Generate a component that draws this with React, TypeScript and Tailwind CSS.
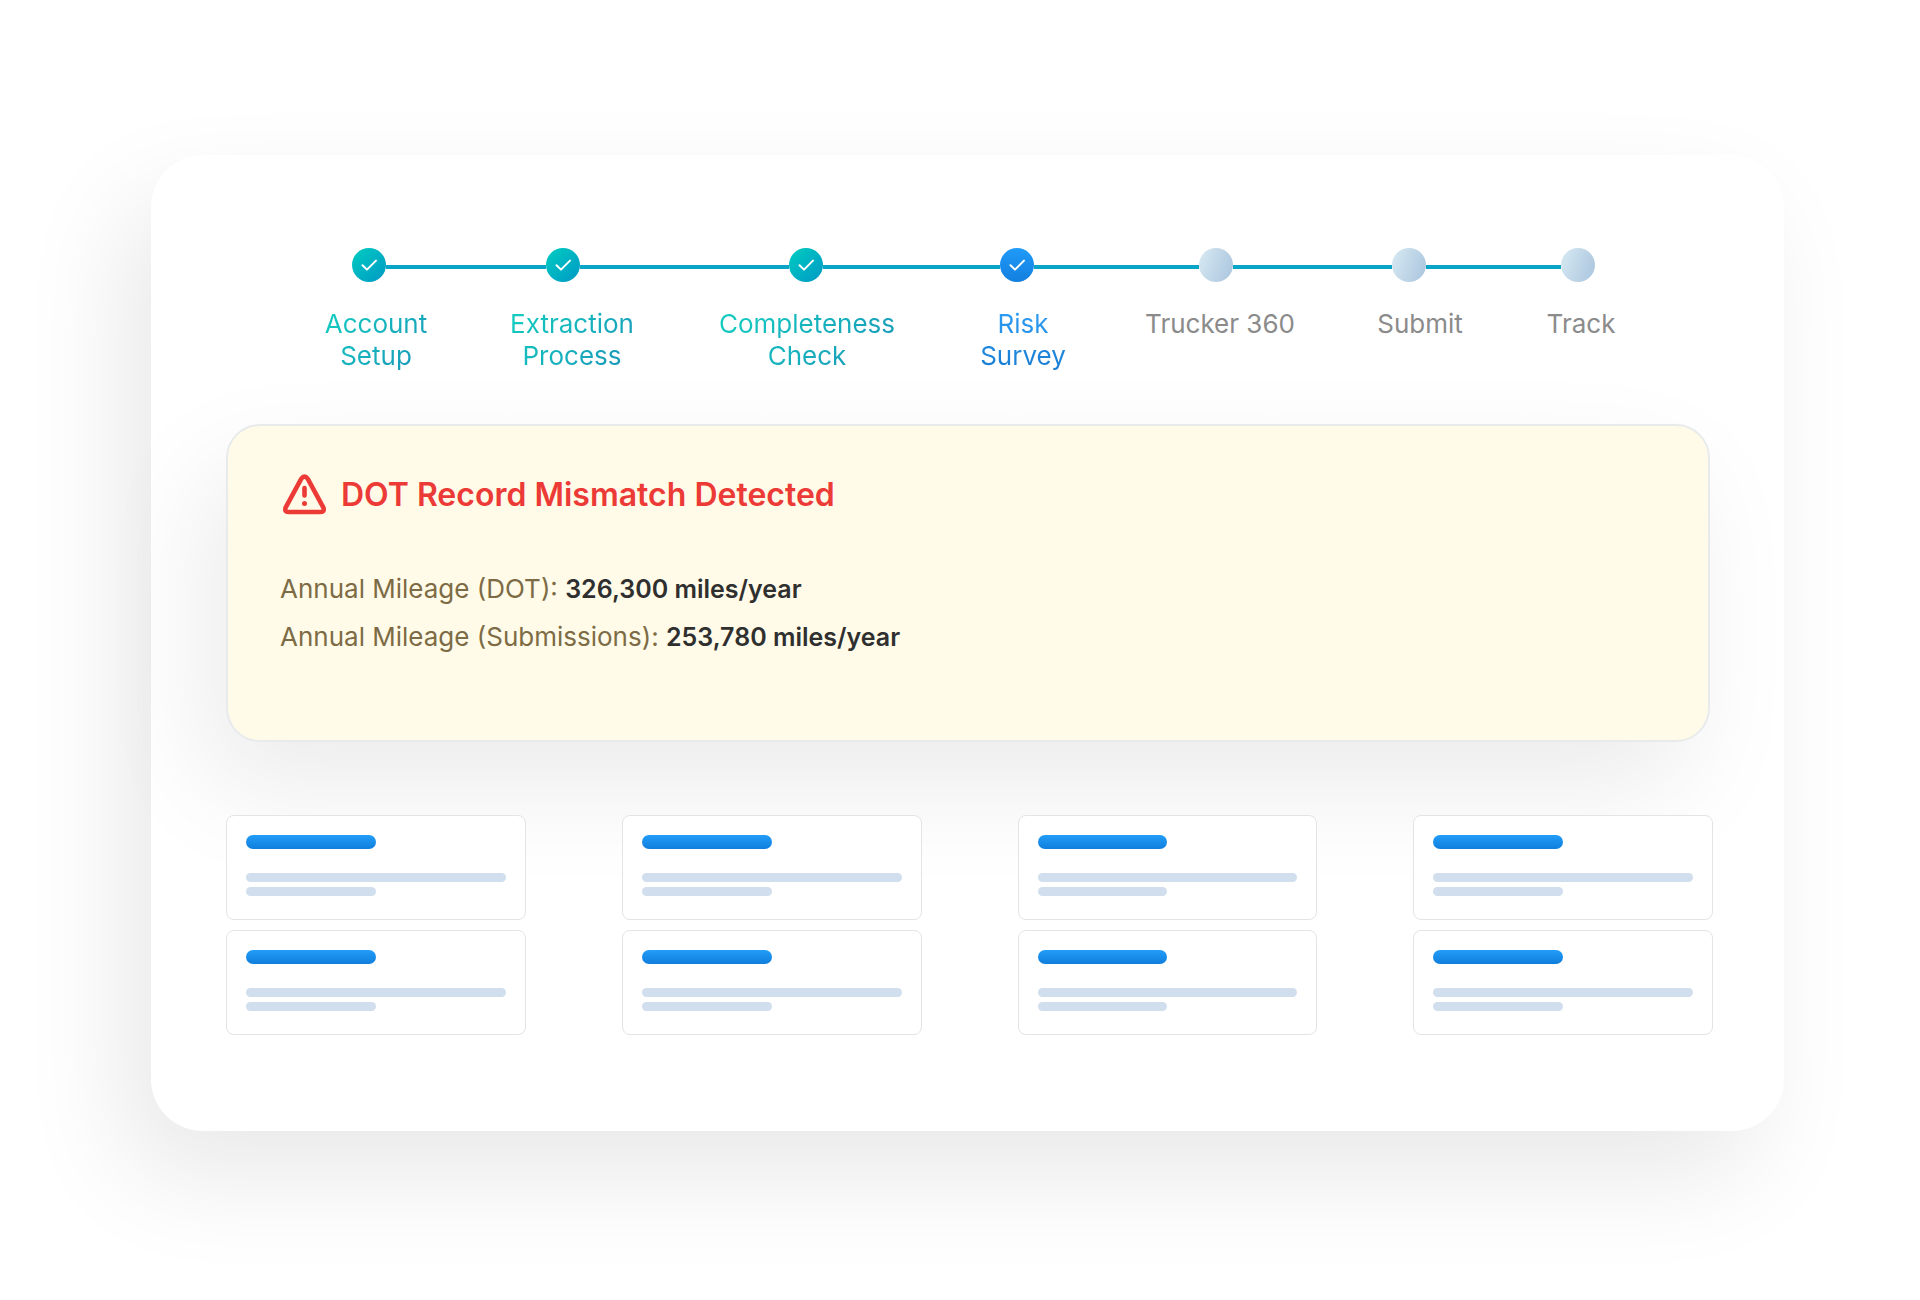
import React from "react";

const TEAL_DOT = "bg-linear-135 from-[#00cdc0] to-[#0098c4]";
const BLUE_DOT = "bg-linear-to-b from-[#209bf8] to-[#137fdf]";
const IDLE_DOT = "bg-linear-110 from-[#d8eaf3] to-[#a9c4dd]";
const TEAL_TEXT = "bg-linear-135 from-[#14cfc0] to-[#1a93b8] bg-clip-text text-transparent";
const BLUE_TEXT = "bg-linear-to-b from-[#2f9ff6] to-[#177bd0] bg-clip-text text-transparent";
const IDLE_TEXT = "text-[#8b8b8b]";

const steps = [
  { lines: ["Account", "Setup"], dot: TEAL_DOT, text: TEAL_TEXT, done: true, width: "w-[106px]", line: "grow-160" },
  { lines: ["Extraction", "Process"], dot: TEAL_DOT, text: TEAL_TEXT, done: true, width: "w-[124px]", line: "grow-210" },
  { lines: ["Completeness", "Check"], dot: TEAL_DOT, text: TEAL_TEXT, done: true, width: "w-[184px]", line: "grow-178" },
  { lines: ["Risk", "Survey"], dot: BLUE_DOT, text: BLUE_TEXT, done: true, width: "w-[86px]", line: "grow-165" },
  { lines: ["Trucker 360"], dot: IDLE_DOT, text: IDLE_TEXT, done: false, width: "w-[146px]", line: "grow-160" },
  { lines: ["Submit"], dot: IDLE_DOT, text: IDLE_TEXT, done: false, width: "w-[92px]", line: "grow-135" },
  { lines: ["Track"], dot: IDLE_DOT, text: IDLE_TEXT, done: false, width: "w-[68px]", line: "" },
];

function Check() {
  return (
    <svg width="34" height="34" viewBox="0 0 34 34" fill="none" stroke="#fff" strokeWidth="2" strokeLinecap="round" strokeLinejoin="round" aria-hidden="true">
      <path d="M10.5 17.3 15 21.6 24 12.6" />
    </svg>
  );
}

function Stepper() {
  return (
    <section aria-label="Progress">
      <div className="flex items-center pr-[118px] pl-[126px]">
        {steps.map((s) => (
          <React.Fragment key={s.lines[0]}>
            <span className={`size-[34px] shrink-0 rounded-full ${s.dot}`}>{s.done && <Check />}</span>
            {s.line && <span className={`mt-1 h-1 basis-0 bg-[#08a5c8] ${s.line}`} />}
          </React.Fragment>
        ))}
      </div>
      <ol className="mt-[26px] flex justify-between pr-[98px] pl-[97px] text-[26px] leading-8">
        {steps.map((s) => (
          <li key={s.lines[0]} className={`flex justify-center text-center whitespace-nowrap ${s.width}`}>
            <span className={`self-start ${s.text}`}>
              {s.lines.map((l) => (
                <span key={l} className="block">{l}</span>
              ))}
            </span>
          </li>
        ))}
      </ol>
    </section>
  );
}

function Alert() {
  return (
    <section className="mt-[52px] mr-[3px] rounded-[34px] border-2 border-[#e8ebec] bg-[#fffbe8] px-[52px] pt-[46px] pb-[79px] shadow-[-22px_46px_110px_rgba(0,0,0,0.08)]">
      <h1 className="flex items-center gap-[15px] text-[32px] leading-[46px] font-semibold text-[#ec3a37]">
        <svg width="46" height="46" viewBox="0 0 46 46" fill="none" stroke="currentColor" strokeWidth="4.6" strokeLinecap="round" strokeLinejoin="round" aria-hidden="true">
          <path d="M21.2 6.8 5.6 35.6Q4.3 40 8.4 40H40.6Q44.7 40 43.4 35.6L27.8 6.8Q24.5 2.500 21.2 6.8Z" />
          <path d="M24.5 16V23.5" />
          <path d="M24.5 31.5V31.6" strokeWidth="5" />
        </svg>
        DOT Record Mismatch Detected
      </h1>
      <div className="mt-[47px] text-[26px] leading-[48px] text-[#7d6b45]">
        <p>Annual Mileage (DOT): <strong className="text-[25px] font-semibold text-[#2f2f2f]">326,300 miles/year</strong></p>
        <p>Annual Mileage (Submissions): <strong className="text-[25px] font-semibold text-[#2f2f2f]">253,780 miles/year</strong></p>
      </div>
    </section>
  );
}

function Placeholder() {
  return (
    <div className="rounded-lg border border-[#e3e4e6] bg-white px-[19px] pt-[19px] pb-[23px]">
      <div className="h-[14px] w-1/2 rounded-full bg-linear-to-b from-[#229df9] to-[#107edc]" />
      <div className="mt-6 h-[9px] rounded-full bg-[#d1deed]" />
      <div className="mt-[5px] h-[9px] w-1/2 rounded-full bg-[#d1deed]" />
    </div>
  );
}

export default function App() {
  return (
    <main className="min-h-screen bg-white pt-[155px] pr-[136px] pb-[170px] pl-[151px] font-['Inter','Open_Sans',sans-serif]">
      <div className="rounded-[52px] bg-white pt-[93px] pr-[71px] pb-24 pl-[75px] shadow-[-28px_46px_106px_rgba(0,0,0,0.09)]">
        <Stepper />
        <Alert />
        <div className="relative mt-[73px] grid grid-cols-4 gap-x-24 gap-y-[10px]">
          {Array.from({ length: 8 }, (_, i) => (
            <Placeholder key={i} />
          ))}
        </div>
      </div>
    </main>
  );
}
